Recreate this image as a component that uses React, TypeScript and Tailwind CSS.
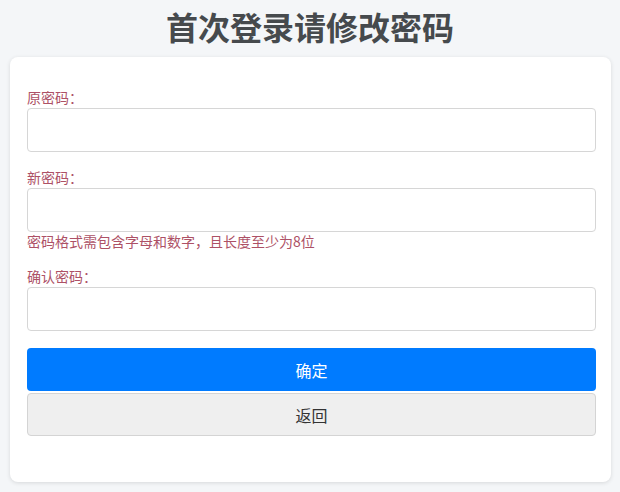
const font = { fontFamily: '"Noto Sans CJK SC", "Liberation Sans", sans-serif' };

const Field = ({ label, hint }: { label: string; hint?: string }) => (
  <div className="mb-[15px]">
    <label className="block text-[14px] leading-[20px] text-[#ad5166] mb-[1px]">{label}</label>
    <input
      type="password"
      className="block w-full h-[44px] rounded-[4px] border border-[#d6d6d6] bg-white px-3 outline-none"
    />
    {hint && <p className="text-[14px] leading-[19px] text-[#ad5166]">{hint}</p>}
  </div>
);

export default function App() {
  return (
    <div className="min-h-[492px] bg-[#f4f6f8] px-[10px] pt-[4px] pb-[10px]" style={font}>
      <h1 className="text-center text-[32px] leading-[44px] font-bold text-[#464a4d] mb-[9px]">
        首次登录请修改密码
      </h1>
      <div className="w-[601px] rounded-[8px] bg-white shadow-[0_1px_4px_rgba(0,0,0,0.12)] pl-[17px] pr-[15px] pt-[30px] pb-[46px]">
        <Field label="原密码：" />
        <Field label="新密码：" hint="密码格式需包含字母和数字，且长度至少为8位" />
        <Field label="确认密码：" />
        <div className="pt-[2px] flex flex-col gap-[2px]">
          <button className="h-[43px] w-full rounded-[4px] bg-[#007bff] text-[16px] text-white">确定</button>
          <button className="h-[43px] w-full rounded-[4px] bg-[#efefef] border border-[#d4d4d4] text-[16px] text-[#333]">
            返回
          </button>
        </div>
      </div>
    </div>
  );
}
